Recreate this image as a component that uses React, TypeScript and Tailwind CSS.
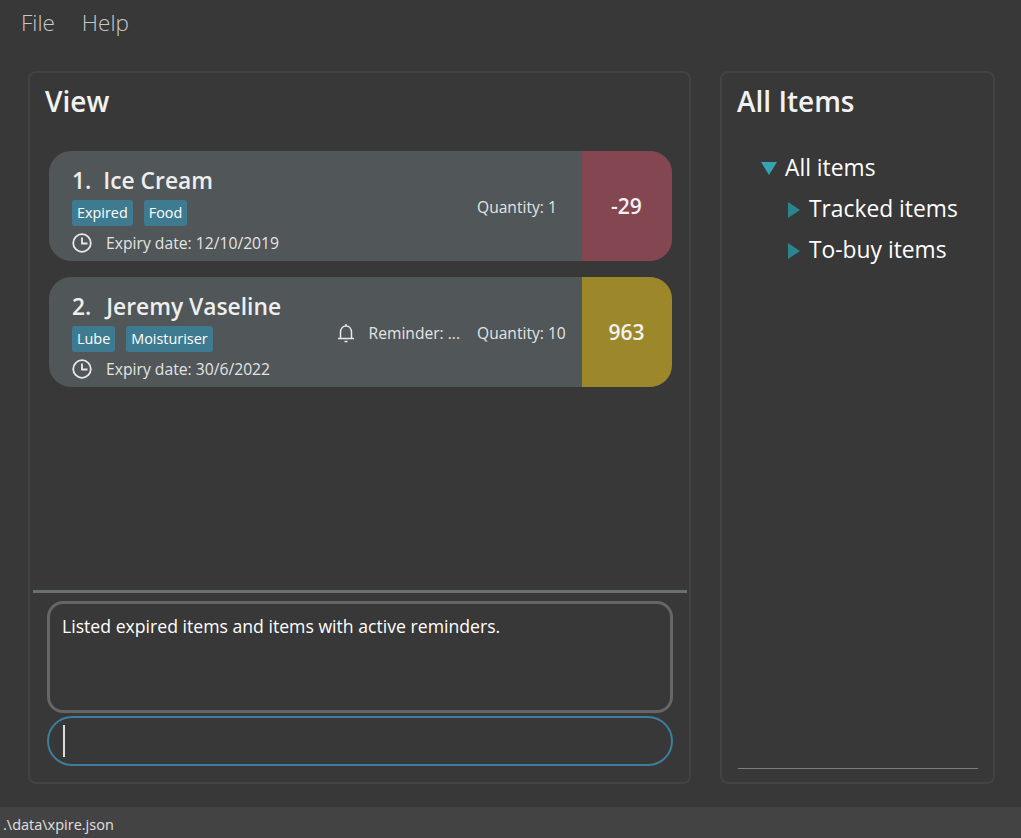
const font = { fontFamily: '"Open Sans", "Noto Sans", sans-serif' };

const ClockIcon = () => (
  <svg width="20" height="20" viewBox="0 0 20 20" fill="none" stroke="#e8e8e8" strokeWidth="1.8" className="shrink-0">
    <circle cx="10" cy="10" r="8.8" />
    <path d="M10 4.5V10.500H15.500" />
  </svg>
);

const BellIcon = () => (
  <svg width="18" height="20" viewBox="0 0 18 20" fill="none" stroke="#e8e8e8" strokeWidth="1.5" className="shrink-0">
    <path d="M9 1V3M3.500 15V9.500C3.500 5.500 6 3 9 3s5.500 2.500 5.500 6.500V15M1 15.500H17M7.500 18.500H10.500" />
  </svg>
);

const Tag = ({ label }: { label: string }) => (
  <span className="flex h-[26px] items-center rounded-[3px] bg-[#3e7b91] px-[5px] text-[14.400px] text-white">{label}</span>
);

type Item = {
  index: string;
  name: string;
  nameGap: string;
  tags: string[];
  expiry: string;
  quantity: string;
  days: string;
  color: string;
  reminder?: boolean;
};

const ItemCard = ({ item }: { item: Item }) => (
  <div className="flex h-[110px] overflow-hidden rounded-[22px] bg-[#515658]">
    <div className="flex min-w-0 flex-1 flex-col pl-[23px] pt-[14px]">
      <div className={`flex h-[32px] items-center text-[22.800px] leading-none font-semibold text-[#eeeeee] ${item.nameGap}`}>
        <span>{item.index}</span>
        <span>{item.name}</span>
      </div>
      <div className="mt-[3px] flex gap-[11px]">
        {item.tags.map((tag) => (
          <Tag key={tag} label={tag} />
        ))}
      </div>
      <div className="mt-[5px] flex items-center gap-[14px] text-[15.700px] text-[#e4e4e4]">
        <ClockIcon />
        <span className="pt-[1px]">{item.expiry}</span>
      </div>
    </div>
    <div className="flex items-center gap-[17px] pr-[15px] pt-[3px] text-[15.600px] text-[#e4e4e4]">
      {item.reminder && (
        <div className="flex items-center gap-[14px]">
          <BellIcon />
          <span>Reminder: ...</span>
        </div>
      )}
      <span className="w-[90px]">{item.quantity}</span>
    </div>
    <div className={`flex w-[90px] items-center justify-center pr-[1px] pt-[1px] text-[21px] font-semibold text-[#f2f2f2] ${item.color}`}>
      {item.days}
    </div>
  </div>
);

const items: Item[] = [
  {
    index: "1.",
    name: "Ice Cream",
    nameGap: "gap-[12px]",
    tags: ["Expired", "Food"],
    expiry: "Expiry date: 12/10/2019",
    quantity: "Quantity: 1",
    days: "-29",
    color: "bg-[#844651]",
  },
  {
    index: "2.",
    name: "Jeremy Vaseline",
    nameGap: "gap-[15px]",
    tags: ["Lube", "Moisturiser"],
    expiry: "Expiry date: 30/6/2022",
    quantity: "Quantity: 10",
    days: "963",
    color: "bg-[#9c882a]",
    reminder: true,
  },
];

const TreeRow = ({ label, open, indent }: { label: string; open?: boolean; indent: string }) => (
  <div className={`flex h-[41px] items-center text-[22.800px] text-white ${indent}`}>
    {open ? (
      <svg width="16" height="13" viewBox="0 0 16 13" className="mr-[8px] shrink-0">
        <path d="M0 0H16L8 13Z" fill="#36a3b2" />
      </svg>
    ) : (
      <svg width="12" height="16" viewBox="0 0 12 16" className="mr-[9px] shrink-0">
        <path d="M0 0L12 8L0 16Z" fill="#2b858f" />
      </svg>
    )}
    <span>{label}</span>
  </div>
);

export default function App() {
  return (
    <div className="flex h-[838px] w-[1021px] flex-col overflow-hidden bg-[#383838]" style={font}>
      {/* Menu bar */}
      <div className="flex h-[45px] items-center gap-[27px] pl-[21px] text-[22.500px] font-light text-[#c8c8c8]">
        <span>File</span>
        <span>Help</span>
      </div>

      <div className="flex flex-1 gap-[29px] pb-[23px] pl-[28px] pr-[26px] pt-[26px]">
        {/* View panel */}
        <div className="flex w-[663px] flex-col rounded-[8px] border-2 border-[#434343]">
          <div className="pl-[15px] pt-[8px] text-[28px] leading-[40px] font-semibold text-[#f2f2f2]">View</div>
          <div className="flex flex-1 flex-col gap-[16px] pl-[19px] pr-[17px] pt-[30px]">
            {items.map((item) => (
              <ItemCard key={item.index} item={item} />
            ))}
          </div>
          <div className="ml-[3px] mr-[2px] h-[3px] bg-[#697070]" />
          <div className="flex flex-col gap-[3px] pb-[16px] pl-[17px] pr-[16px] pt-[8px]">
            <div className="h-[112px] rounded-[16px] border-[3px] border-[#666666] px-[12px] py-[9px] text-[17.650px] leading-[26px] text-white">
              Listed expired items and items with active reminders.
            </div>
            <div className="flex h-[50px] items-center rounded-[25px] border-2 border-[#3f7d9e] pl-[14px]">
              <div className="h-[32px] w-[2px] bg-[#dddddd]" />
            </div>
          </div>
        </div>

        {/* All items panel */}
        <div className="flex w-[275px] flex-col rounded-[8px] border-2 border-[#434343]">
          <div className="pl-[15px] pt-[8px] text-[28px] leading-[40px] font-semibold text-[#f2f2f2]">All Items</div>
          <div className="flex-1 pt-[27px]">
            <TreeRow label="All items" open indent="pl-[39px]" />
            <TreeRow label="Tracked items" indent="pl-[66px]" />
            <TreeRow label="To-buy items" indent="pl-[66px]" />
          </div>
          <div className="mb-[13px] ml-[16px] mr-[15px] h-px bg-[#7d7d7d]" />
        </div>
      </div>

      {/* Status bar */}
      <div className="flex h-[31px] items-center bg-[#434343] pl-[3px] pt-[5px] text-[14.500px] text-[#e0e0e0]">.\data\xpire.json</div>
    </div>
  );
}
